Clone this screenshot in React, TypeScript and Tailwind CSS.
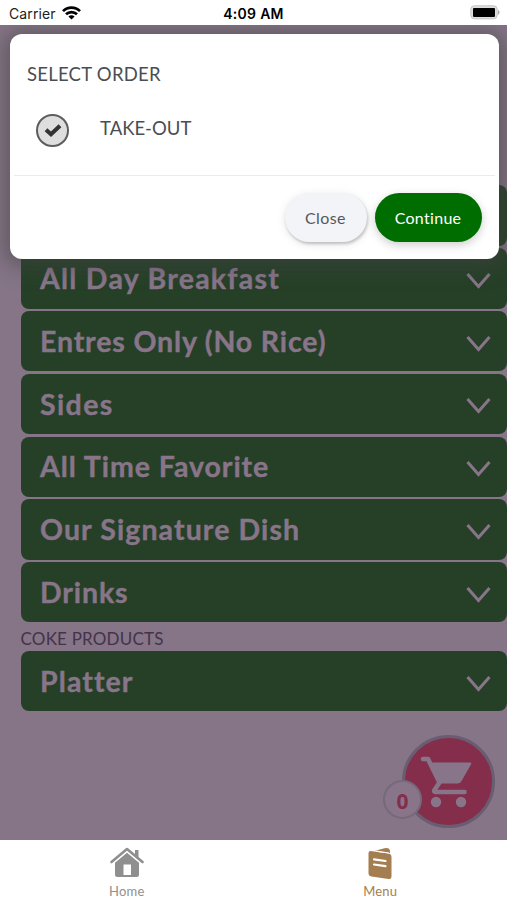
import React from "react";
import clsx from "clsx";

type MenuSection = {
  title: string;
  spacing: string;
  caption?: string;
};

const sections: MenuSection[] = [
  { title: "Rice Meals", spacing: "tracking-[0.9px]" },
  { title: "All Day Breakfast", spacing: "tracking-[1.25px]" },
  { title: "Entres Only (No Rice)", spacing: "tracking-[0.85px]" },
  { title: "Sides", spacing: "tracking-[1.4px]" },
  { title: "All Time Favorite", spacing: "tracking-[0.95px]" },
  { title: "Our Signature Dish", spacing: "tracking-[1.1px]" },
  { title: "Drinks", spacing: "tracking-[0.9px]", caption: "COKE PRODUCTS" },
  { title: "Platter", spacing: "tracking-[1.1px]" },
];

function StatusBar() {
  return (
    <div className="h-[25px] shrink-0 grid grid-cols-3 items-center pl-[9px] pr-[7px] pt-[2px] bg-white text-black font-['Inter',sans-serif]">
      <div className="flex items-center gap-[6px]">
        <span className="text-[14px] leading-none tracking-[0.1px] text-[#222]">Carrier</span>
        <svg className="-mt-[2px]" width="19" height="14" viewBox="0 0 19 14" fill="none" stroke="#000" strokeWidth="2.7">
          <path d="M1 5.1C5.7.4 13.3.4 18 5.1" />
          <path d="M4 8.3c3-3 8-3 11 0" />
          <path d="M6.4 10.4c1.7-1.7 4.5-1.7 6.2 0L9.5 13.5z" fill="#000" stroke="none" />
        </svg>
      </div>
      <span className="-ml-[2px] text-center text-[14px] leading-none font-semibold tracking-[0.3px]">4:09 AM</span>
      <svg className="justify-self-end -mt-[2px]" width="30" height="15" viewBox="0 0 30 15">
        <rect x=".8" y=".8" width="26.4" height="13" rx="3.5" fill="#dedede" stroke="#c4c4c4" />
        <rect x="3" y="3" width="22" height="9" rx="1" fill="#000" />
        <path d="M28 5c2 .8 2 4 0 4.8z" fill="#a9a9a9" />
      </svg>
    </div>
  );
}

function SectionRow({ section }: { section: MenuSection }) {
  return (
    <>
      <div className="h-[60.4px] mb-[2.4px] pl-[19.5px] pr-[16px] rounded-lg bg-[#264028] flex items-center justify-between text-[#88758a]">
        <span
          className={clsx(
            "text-[28.5px] leading-none font-bold whitespace-nowrap [-webkit-text-stroke:0.4px_#88758a]",
            section.spacing
          )}
        >
          {section.title}
        </span>
        <svg className="mt-[5px]" width="25" height="18" viewBox="0 0 25 18" fill="none" stroke="currentColor" strokeWidth="3">
          <path d="M1.500 2 12.500 14.500 23.500 2" />
        </svg>
      </div>
      {section.caption && (
        <div className="h-[26px] pt-[4px] text-[17px] leading-[20px] tracking-[0.2px] text-[#44334a]">
          {section.caption}
        </div>
      )}
    </>
  );
}

function CartButton() {
  return (
    <div className="absolute left-[402px] top-[710px] size-[93px] rounded-full border-[3px] border-[#6b5d71] bg-[#842e4b]">
      <svg className="absolute left-[15px] top-[18px]" width="54" height="54" viewBox="0 0 54 54" fill="#88758a">
        <path d="M9 6.500h41q2 0 1 2L41.500 25q-1.200 2.500-4 2.500H19L7 5z" />
        <path
          d="M3 3h5L19.500 26.500 14.500 34q-1 2 1 2h29"
          fill="none"
          stroke="#88758a"
          strokeWidth="4.600"
          strokeLinecap="round"
          strokeLinejoin="round"
        />
        <circle cx="16" cy="46" r="5.2" />
        <circle cx="41" cy="46" r="5.2" />
      </svg>
      <div className="absolute -left-[22px] top-[42px] size-[39px] pt-[4px] rounded-full border-2 border-[#76697b] bg-[#88758a] flex items-center justify-center text-[21px] leading-none font-bold text-[#842e4b] font-['Open_Sans',sans-serif]">
        0
      </div>
    </div>
  );
}

function OrderModal() {
  return (
    <div className="absolute left-[9.5px] top-[9px] w-[489px] h-[225px] rounded-xl bg-white shadow-[0_2px_20px_6px_rgba(65,65,65,0.55)] text-[#4a4e53]">
      <div className="h-[141px] pl-[17.5px] pt-[29px]">
        <h2 className="text-[18.5px] leading-[22px] tracking-[0.25px]">SELECT ORDER</h2>
        <div className="mt-[29px] pl-[9px] flex items-center">
          <div className="size-[33px] rounded-full border-2 border-[#5d5d5d] bg-[#dedede] flex items-center justify-center">
            <svg width="18" height="15" viewBox="0 0 18 15" fill="none" stroke="#333" strokeWidth="4">
              <path d="M2 6.800 7 11.300 16 2.800" />
            </svg>
          </div>
          <span className="ml-[31px] -mt-[6px] text-[18.5px] leading-[22px]">TAKE-OUT</span>
        </div>
      </div>
      <div className="mx-1 border-t border-[#ebebeb] pt-[17px] pr-[13px] flex justify-end gap-2 text-[16px]">
        <button className="w-[82px] h-[49px] rounded-full bg-[#f3f4f8] tracking-[0.4px] text-[#55585c] shadow-[1px_2px_3px_rgba(0,0,0,0.2),0_2px_10px_rgba(0,0,0,0.1)]">
          Close
        </button>
        <button className="w-[107px] h-[49px] rounded-full bg-[#006d00] tracking-[0.3px] text-white shadow-[0_3px_10px_rgba(0,0,0,0.2)]">
          Continue
        </button>
      </div>
    </div>
  );
}

function TabBar() {
  return (
    <div className="flex-1 bg-white grid grid-cols-2 text-[13px] leading-none">
      <div className="flex flex-col items-center pt-[7px] text-[#8f8f8f]">
        <svg width="34" height="31" viewBox="0 0 34 31" fill="currentColor">
          <path d="M1.500 15 17 2l15.500 13" fill="none" stroke="currentColor" strokeWidth="2.600" strokeLinecap="round" strokeLinejoin="round" />
          <path d="M25 3h3.500v8L25 8z" />
          <path fillRule="evenodd" d="M5 15.700 17 5.700l12 10V27.500q0 2.500-2.500 2.500h-19Q5 30 5 27.500zM13.500 17.500v10.500h7.500V17.500z" />
        </svg>
        <span className="mt-[7px] tracking-[0.2px]">Home</span>
      </div>
      <div className="flex flex-col items-center pt-[7px] text-[#a47e50]">
        <svg width="26" height="33" viewBox="0 0 26 33" fill="currentColor">
          <path d="M8 3.800 17.500 1.200Q22.500 0 23 4v2z" />
          <path d="M3.500 4 21.500 6.500Q24.500 7 24.500 10v19.500q0 3-3 2.500L4.500 29.500Q1.500 29 1.500 26V6Q1.500 4 3.500 4z" />
          <path d="M9 4.200 22 6" stroke="#fff" strokeWidth="1.200" />
          <path d="M7 12.300 18.500 14M7 17.500l11.500 1.700" stroke="#fff" strokeWidth="2.200" strokeLinecap="round" />
        </svg>
        <span className="mt-[5px] tracking-[0.2px]">Menu</span>
      </div>
    </div>
  );
}

export default function App() {
  return (
    <div className="w-[507px] h-[900px] flex flex-col overflow-hidden font-['Lato',sans-serif]">
      <StatusBar />
      <div className="relative h-[815px] shrink-0 overflow-hidden bg-[#857587]">
        <div className="pt-[160.4px] pl-[20.5px]">
          {sections.map((section) => (
            <SectionRow key={section.title} section={section} />
          ))}
        </div>
        <CartButton />
        <OrderModal />
      </div>
      <TabBar />
    </div>
  );
}
